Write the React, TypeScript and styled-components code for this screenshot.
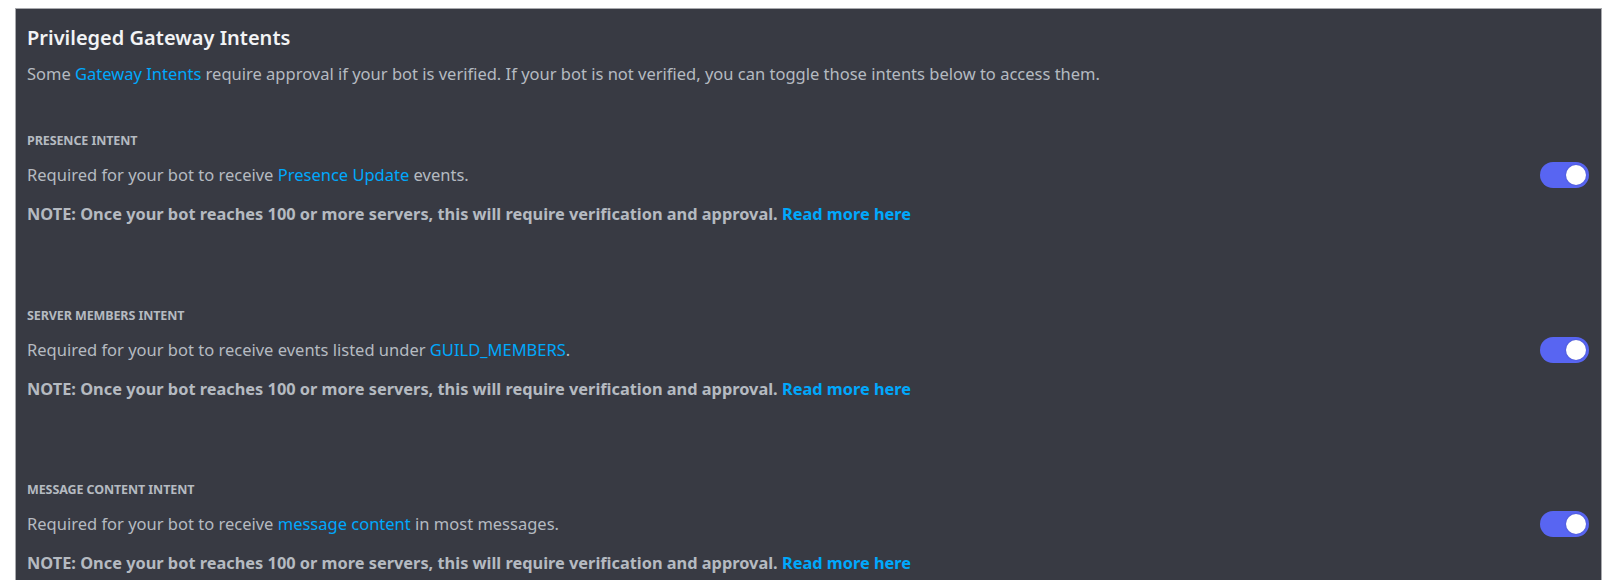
import React from "react";
import styled, { createGlobalStyle } from "styled-components";

const GlobalStyle = createGlobalStyle`
  html, body { margin: 0; padding: 0; background: #ffffff; }
  body { font-family: "Noto Sans", "Open Sans", sans-serif; }
  * { box-sizing: border-box; }
`;

const Panel = styled.section`
  margin: 8px 14px 0 15px;
  height: 572px;
  background: #383a43;
  border: 1px solid #a8a9ad;
  border-bottom: none;
  padding: 17px 12px 0 11px;
  display: flex;
  flex-direction: column;
`;

const Title = styled.h2`
  margin: 0;
  font-size: 20px;
  line-height: 24px;
  font-weight: 600;
  color: #f2f3f5;
`;

const Description = styled.p`
  margin: 14px 0 0;
  font-size: 16.5px;
  line-height: 20px;
  color: #b5bac1;
`;

const Link = styled.a<{ $bold?: boolean }>`
  color: #00a8fc;
  text-decoration: none;
  font-weight: ${(p) => (p.$bold ? 700 : 400)};
`;

const IntentList = styled.div`
  margin-top: 49px;
  display: flex;
  flex-direction: column;
  gap: 83.5px;
`;

const Intent = styled.div`
  display: grid;
  grid-template-columns: 1fr auto;
  grid-template-areas:
    "label ."
    "desc toggle"
    "note .";
`;

const Label = styled.h3`
  grid-area: label;
  margin: 0;
  font-size: 12.5px;
  line-height: 16px;
  font-weight: 700;
  color: #b5bac1;
  letter-spacing: -0.1px;
`;

const IntentText = styled.div`
  grid-area: desc;
  margin-top: 16px;
  font-size: 16.5px;
  line-height: 20px;
  color: #b5bac1;
`;

const Note = styled.div`
  grid-area: note;
  margin-top: 19px;
  font-size: 16.35px;
  line-height: 20px;
  font-weight: 700;
  color: #b5bac1;
`;

const Toggle = styled.button<{ $on: boolean }>`
  grid-area: toggle;
  align-self: end;
  margin-bottom: -3px;
  position: relative;
  width: 49px;
  height: 26px;
  border: none;
  padding: 0;
  border-radius: 13px;
  background: ${(p) => (p.$on ? "#5865f2" : "#80848e")};
  cursor: pointer;

  &::after {
    content: "";
    position: absolute;
    top: 3px;
    left: ${(p) => (p.$on ? "26px" : "3px")};
    width: 20px;
    height: 20px;
    border-radius: 50%;
    background: #ffffff;
    box-shadow: 0 0 2px rgba(0, 0, 0, 0.25);
  }
`;

const NOTE_TEXT =
  "NOTE: Once your bot reaches 100 or more servers, this will require verification and approval. ";

const intents: { label: string; before: string; link: string; after: string }[] = [
  { label: "PRESENCE INTENT", before: "Required for your bot to receive ", link: "Presence Update", after: " events." },
  { label: "SERVER MEMBERS INTENT", before: "Required for your bot to receive events listed under ", link: "GUILD_MEMBERS", after: "." },
  { label: "MESSAGE CONTENT INTENT", before: "Required for your bot to receive ", link: "message content", after: " in most messages." },
];

export default function App() {
  return (
    <>
      <GlobalStyle />
      <Panel>
        <Title>Privileged Gateway Intents</Title>
        <Description>
          Some <Link href="#">Gateway Intents</Link> require approval if your bot is verified. If your bot is not
          verified, you can toggle those intents below to access them.
        </Description>
        <IntentList>
          {intents.map((it) => (
            <Intent key={it.label}>
              <Label>{it.label}</Label>
              <IntentText>
                {it.before}
                <Link href="#">{it.link}</Link>
                {it.after}
              </IntentText>
              <Toggle $on aria-label={it.label} />
              <Note>
                {NOTE_TEXT}
                <Link href="#" $bold>
                  Read more here
                </Link>
              </Note>
            </Intent>
          ))}
        </IntentList>
      </Panel>
    </>
  );
}
